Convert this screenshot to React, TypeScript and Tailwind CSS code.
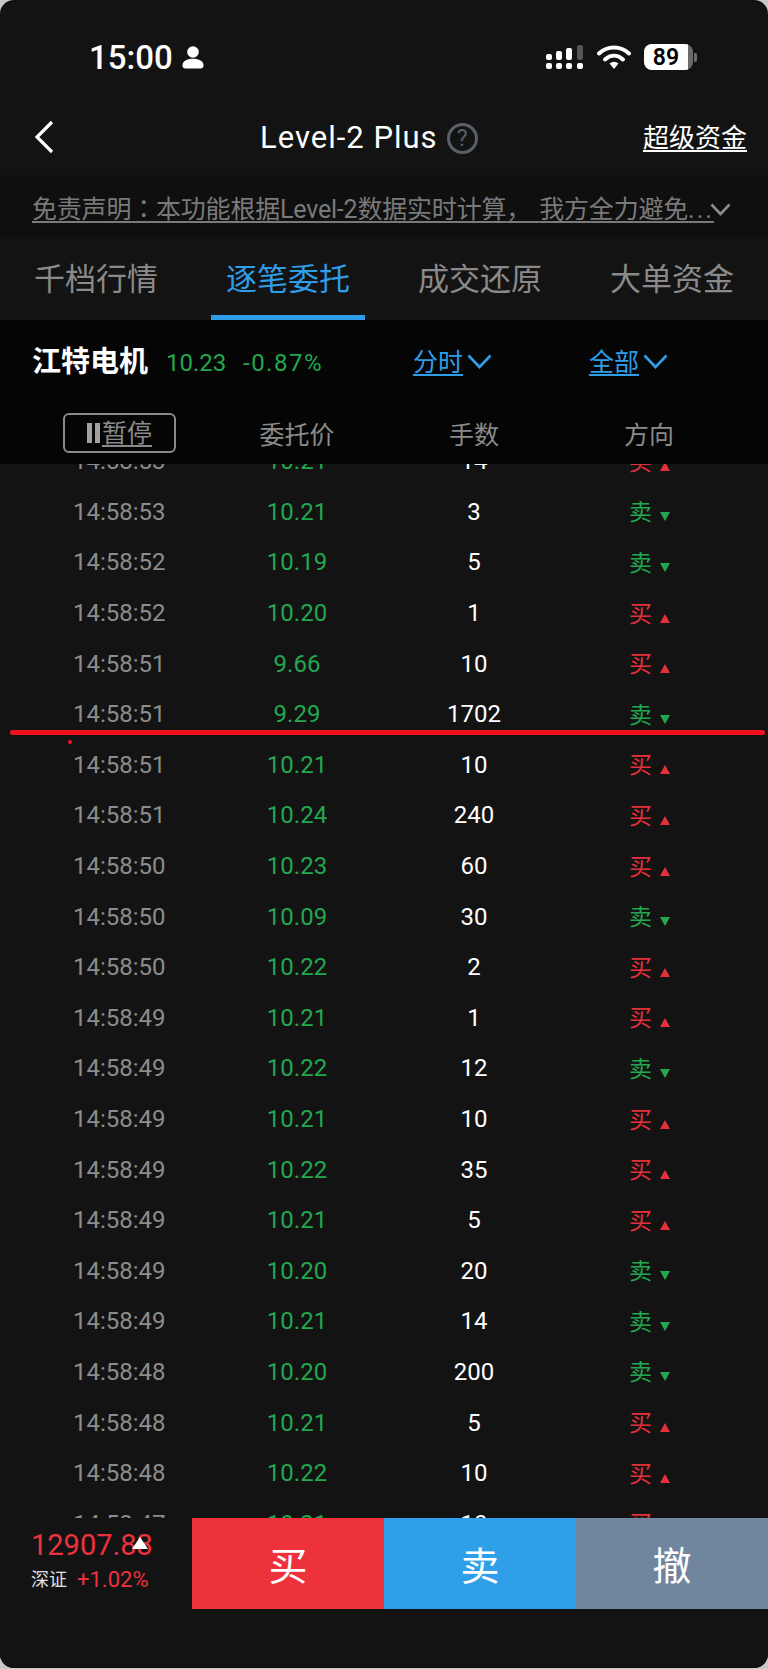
import React from "react";

const FONT = "font-['Roboto','Noto_Sans_CJK_SC',sans-serif]";

interface Tick {
  time: string;
  price: string;
  lots: string;
  side: "buy" | "sell";
}

const ticks: Tick[] = [
  { time: "14:58:53", price: "10.21", lots: "14", side: "buy" },
  { time: "14:58:53", price: "10.21", lots: "3", side: "sell" },
  { time: "14:58:52", price: "10.19", lots: "5", side: "sell" },
  { time: "14:58:52", price: "10.20", lots: "1", side: "buy" },
  { time: "14:58:51", price: "9.66", lots: "10", side: "buy" },
  { time: "14:58:51", price: "9.29", lots: "1702", side: "sell" },
  { time: "14:58:51", price: "10.21", lots: "10", side: "buy" },
  { time: "14:58:51", price: "10.24", lots: "240", side: "buy" },
  { time: "14:58:50", price: "10.23", lots: "60", side: "buy" },
  { time: "14:58:50", price: "10.09", lots: "30", side: "sell" },
  { time: "14:58:50", price: "10.22", lots: "2", side: "buy" },
  { time: "14:58:49", price: "10.21", lots: "1", side: "buy" },
  { time: "14:58:49", price: "10.22", lots: "12", side: "sell" },
  { time: "14:58:49", price: "10.21", lots: "10", side: "buy" },
  { time: "14:58:49", price: "10.22", lots: "35", side: "buy" },
  { time: "14:58:49", price: "10.21", lots: "5", side: "buy" },
  { time: "14:58:49", price: "10.20", lots: "20", side: "sell" },
  { time: "14:58:49", price: "10.21", lots: "14", side: "sell" },
  { time: "14:58:48", price: "10.20", lots: "200", side: "sell" },
  { time: "14:58:48", price: "10.21", lots: "5", side: "buy" },
  { time: "14:58:48", price: "10.22", lots: "10", side: "buy" },
  { time: "14:58:47", price: "10.21", lots: "10", side: "buy" },
];

const Row: React.FC<{ tick: Tick }> = ({ tick }) => (
  <div className="grid grid-cols-[208px_178px_176px_206px] h-[50.6px] shrink-0 items-center text-[24px] leading-none">
    <div className="pl-[73px] text-[#8c8c8c]">{tick.time}</div>
    <div className="text-center text-[#22a84f]">{tick.price}</div>
    <div className="text-center text-white">{tick.lots}</div>
    <div className="pl-[67px] pt-[2px] flex items-center">
      {tick.side === "buy" ? (
        <>
          <span className="text-[23px] text-[#e5303a]">买</span>
          <span className="ml-[8px] mt-[8px] w-0 h-0 border-l-[5px] border-r-[5px] border-b-[9px] border-l-transparent border-r-transparent border-b-[#e5303a]" />
        </>
      ) : (
        <>
          <span className="text-[23px] text-[#22a84f]">卖</span>
          <span className="ml-[8px] mt-[8px] w-0 h-0 border-l-[5px] border-r-[5px] border-t-[9px] border-l-transparent border-r-transparent border-t-[#22a84f]" />
        </>
      )}
    </div>
  </div>
);

const Chevron: React.FC<{ className: string; w: number; h: number }> = ({ className, w, h }) => (
  <svg className={className} width={w} height={h} viewBox={`0 0 ${w} ${h}`} fill="none">
    <path d={`M1.5 1.5L${w / 2} ${h - 2}L${w - 1.5} 1.5`} stroke="currentColor" strokeWidth="2.6" />
  </svg>
);

const StatusIcons: React.FC = () => (
  <div className="flex items-center gap-[13px]">
    <svg width="38" height="24" viewBox="0 0 38 24">
      <rect x="0" y="9" width="6" height="6" rx="2" fill="#fff" />
      <rect x="10" y="6" width="6" height="9" rx="2" fill="#fff" />
      <rect x="20" y="3" width="6" height="12" rx="2" fill="#fff" />
      <rect x="31" y="0" width="6" height="15" rx="2" fill="#555" />
      <rect x="0" y="18" width="6" height="6" rx="2" fill="#fff" />
      <rect x="10" y="18" width="6" height="6" rx="2" fill="#fff" />
      <rect x="20" y="18" width="6" height="6" rx="2" fill="#fff" />
      <rect x="31" y="18" width="6" height="6" rx="2" fill="#fff" />
    </svg>
    <svg width="34" height="26" viewBox="0 0 34 26" fill="none">
      <path d="M2 9.5C10.5 1.5 23.5 1.5 32 9.5" stroke="#fff" strokeWidth="4" strokeLinecap="round" />
      <path d="M8 15.5C13.5 10.5 20.5 10.5 26 15.5" stroke="#fff" strokeWidth="4" strokeLinecap="round" />
      <path d="M12.5 19.5L17 25L21.5 19.5C18.5 17.3 15.5 17.3 12.5 19.5Z" fill="#fff" />
    </svg>
    <div className="flex items-center">
      <div className="w-[49px] h-[26px] rounded-[8px] bg-[#6b6b6b] overflow-hidden">
        <div className="w-[44px] h-full bg-white flex items-center justify-center text-[23px] font-semibold text-black leading-none">
          89
        </div>
      </div>
      <div className="ml-[1px] w-[3px] h-[9px] rounded-r-[2px] bg-[#6b6b6b]" />
    </div>
  </div>
);

export default function App() {
  return (
    <div className={`${FONT} relative w-[768px] h-[1669px] overflow-hidden bg-[#c8c8c8]`}>
      <div className="relative flex flex-col h-[1668px] rounded-[14px] overflow-hidden bg-[#131313]">
        {/* status bar */}
        <div className="h-[98px] shrink-0 pt-[38px] pl-[89px] pr-[71px] flex items-start justify-between">
          <div className="flex items-center h-[38px] text-white">
            <span className="text-[33px] font-medium leading-none">15:00</span>
            <svg className="ml-[9px]" width="22" height="23" viewBox="0 0 22 23" fill="#fff">
              <circle cx="11" cy="6" r="5.8" />
              <path d="M0.5 19.5C0.5 15 5 12.8 11 12.8C17 12.8 21.5 15 21.5 19.5C21.5 21.5 20.5 22.5 18.5 22.5H3.5C1.5 22.5 0.5 21.5 0.5 19.5Z" />
            </svg>
          </div>
          <div className="h-[38px] flex items-center">
            <StatusIcons />
          </div>
        </div>

        {/* nav */}
        <div className="h-[77px] shrink-0 relative flex items-center pt-[3px] pl-[260px]">
          <svg className="absolute left-[33px] top-[22px]" width="22" height="34" viewBox="0 0 22 34" fill="none">
            <path d="M19 2L4 17L19 32" stroke="#fff" strokeWidth="3.2" />
          </svg>
          <div className="flex items-center text-white">
            <span className="text-[31px] tracking-[1px]">Level-2 Plus</span>
            <span className="ml-[9px] w-[31px] h-[31px] rounded-full border-[3px] border-[#59606a] text-[#59606a] flex items-center justify-center text-[23px] leading-none">
              ?
            </span>
          </div>
          <span className="absolute right-[21px] top-[23px] text-[26px] leading-[34px] text-white underline decoration-2 underline-offset-[3px]">
            超级资金
          </span>
        </div>

        {/* disclaimer */}
        <div className="h-[63px] shrink-0 bg-[#0f0f0f] flex items-center pl-[32px] pt-[4px]">
          <span className="text-[25px] text-[#7a7a7a] underline decoration-2 underline-offset-[3px] whitespace-nowrap tracking-[-0.2px]">
            免责声明<span className="font-['Noto_Sans_CJK_TC']">：</span>本功能根据Level-2数据实时计算
            <span className="tracking-[8px]">，</span>我方全力避免
            <span className="tracking-[2px]">...</span>
          </span>
          <Chevron className="ml-[-4px] mt-[2px] text-[#8a8a8a]" w={21} h={13} />
        </div>

        {/* tabs */}
        <div className="h-[82px] shrink-0 grid grid-cols-4 text-[31px] text-[#8a8a8a]">
          <div className="flex items-center justify-center pt-[2px]">千档行情</div>
          <div className="relative flex items-center justify-center pt-[2px] text-[#2f9de8]">
            逐笔委托
            <div className="absolute left-[19px] right-[19px] bottom-0 h-[5px] bg-[#2f9de8]" />
          </div>
          <div className="flex items-center justify-center pt-[2px]">成交还原</div>
          <div className="flex items-center justify-center pt-[2px]">大单资金</div>
        </div>

        {/* header */}
        <div className="relative z-10 h-[144px] shrink-0 bg-[#050505]">
          <div className="h-[86px] flex items-center pl-[32px]">
            <span className="w-[134px] text-[29px] font-semibold text-white whitespace-nowrap">江特电机</span>
            <span className="w-[77px] text-[24px] text-[#22a84f]">10.23</span>
            <span className="w-[170px] text-[24px] tracking-[1.5px] text-[#22a84f]">-0.87%</span>
            <span className="w-[50px] text-[25px] text-[#2f9de8] underline decoration-2 underline-offset-[3px]">分时</span>
            <Chevron className="ml-[4px] mb-[4px] text-[#2f9de8]" w={25} h={15} />
            <span className="ml-[97px] w-[50px] text-[25px] text-[#2f9de8] underline decoration-2 underline-offset-[3px]">全部</span>
            <Chevron className="ml-[4px] mb-[4px] text-[#2f9de8]" w={25} h={15} />
          </div>
          <div className="mt-[7px] grid grid-cols-[208px_178px_176px_206px] items-center text-[25px] text-[#8a8a8a]">
            <div className="pl-[63px]">
              <div className="w-[113px] h-[40px] rounded-[6px] border-[2px] border-[#8a8a8a] flex items-center justify-center">
                <span className="w-[5px] h-[20px] bg-[#a0a0a0]" />
                <span className="ml-[3px] w-[5px] h-[20px] bg-[#a0a0a0]" />
                <span className="ml-[2px] underline decoration-2 underline-offset-[3px] leading-none">暂停</span>
              </div>
            </div>
            <div className="text-center pt-[5px] leading-none">委托价</div>
            <div className="text-center pt-[5px] leading-none">手数</div>
            <div className="pl-[62px] pt-[5px] leading-none">方向</div>
          </div>
        </div>

        {/* ticks */}
        <div className="flex flex-col shrink-0 mt-[-28px]">
          {ticks.map((tick, i) => (
            <Row key={i} tick={tick} />
          ))}
        </div>

        {/* bottom bar */}
        <div className="absolute z-10 left-0 right-0 top-[1518px] bottom-0 bg-[#131313]">
          <div className="h-[91px] flex">
            <div className="relative w-[192px] pl-[31px] pt-[10px]">
              <div className="text-[29px] leading-[34px] text-[#ee323c]">12907.83</div>
              <div className="absolute left-[132px] top-[19px] w-0 h-0 border-l-[8px] border-r-[8px] border-b-[12px] border-l-transparent border-r-transparent border-b-white" />
              <div className="mt-[5px] flex items-center leading-[26px]">
                <span className="text-[18px] text-[#e0e0e0]">深证</span>
                <span className="ml-[10px] text-[22px] text-[#ee323c]">+1.02%</span>
              </div>
            </div>
            <div className="w-[192px] bg-[#ee323c] flex items-center justify-center pt-[8px] text-[39px] text-white">买</div>
            <div className="w-[192px] bg-[#2f9fea] flex items-center justify-center pt-[8px] text-[39px] text-white">卖</div>
            <div className="w-[192px] bg-[#70869f] flex items-center justify-center pt-[8px] text-[39px] text-white">撤</div>
          </div>
        </div>

        {/* hand-drawn red annotation */}
        <div className="absolute z-20 left-[10px] right-[3px] top-[730px] h-[5px] rounded-full bg-[#f3111f]" />
        <div className="absolute z-20 left-[68px] top-[740px] w-[4px] h-[4px] rounded-full bg-[#f3111f]" />
      </div>
    </div>
  );
}
